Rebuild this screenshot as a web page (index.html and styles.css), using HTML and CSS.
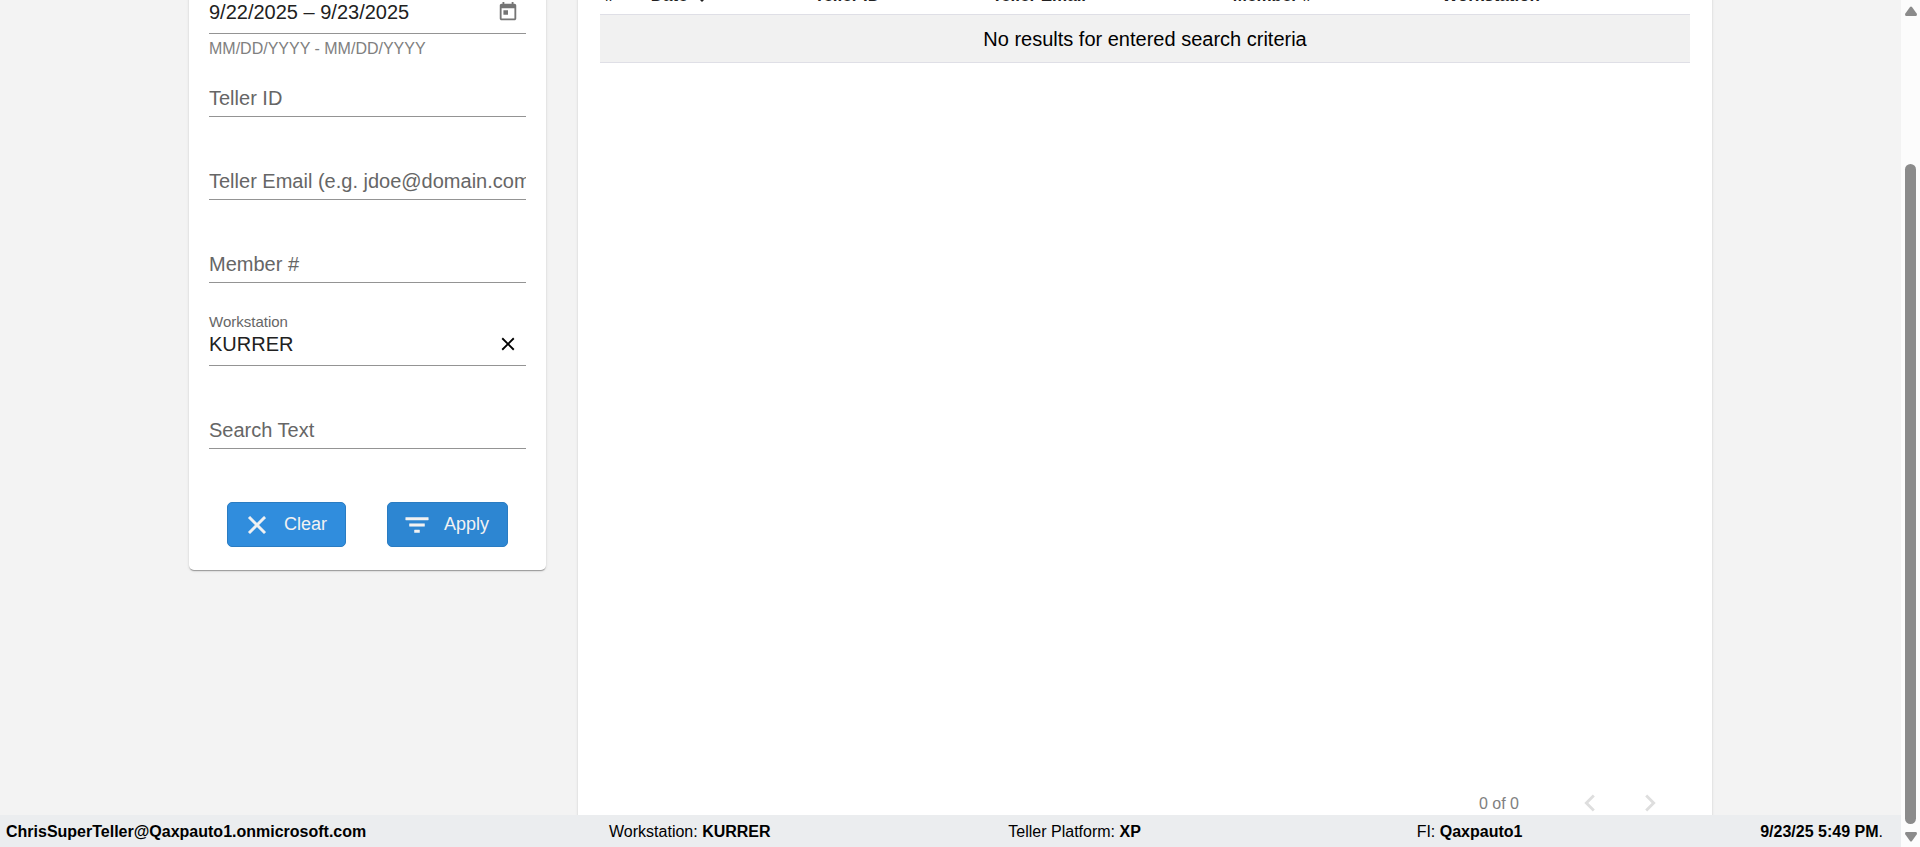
FILE: index.html
```html
<!DOCTYPE html>
<html lang="en">

<head>
    <meta charset="UTF-8">
    <meta name="viewport" content="width=device-width, initial-scale=1.0">
    <title>Teller Journal</title>
    <link rel="stylesheet" href="styles.css">
</head>

<body>
    <div class="page">
        <main class="main">
            <div class="content">
                <!-- Search filters -->
                <form class="card filters">
                    <div class="field">
                        <div class="field-label"></div>
                        <div class="field-row">
                            <input type="text" id="dateRange" aria-label="Date range" value="9/22/2025 – 9/23/2025">
                            <button type="button" class="icon-button calendar" aria-label="Open calendar">
                                <svg viewBox="0 0 24 24"><path d="M19 3h-1V1h-2v2H8V1H6v2H5c-1.11 0-1.99.9-1.99 2L3 19c0 1.1.89 2 2 2h14c1.1 0 2-.9 2-2V5c0-1.1-.9-2-2-2zm0 16H5V8h14v11zM7 10h5v5H7z"/></svg>
                            </button>
                        </div>
                        <div class="hint">MM/DD/YYYY - MM/DD/YYYY</div>
                    </div>
                    <div class="field empty">
                        <div class="field-row">
                            <input type="text" id="tellerId" aria-label="Teller ID" placeholder="Teller ID">
                        </div>
                    </div>
                    <div class="field empty">
                        <div class="field-row">
                            <input type="text" id="tellerEmail" aria-label="Teller Email" placeholder="Teller Email (e.g. jdoe@domain.com)">
                        </div>
                    </div>
                    <div class="field empty">
                        <div class="field-row">
                            <input type="text" id="member" aria-label="Member #" placeholder="Member #">
                        </div>
                    </div>
                    <div class="field">
                        <label class="field-label" for="workstation">Workstation</label>
                        <div class="field-row">
                            <input type="text" id="workstation" value="KURRER">
                            <button type="button" class="icon-button" aria-label="Clear workstation">
                                <svg viewBox="0 0 24 24"><path d="M19 6.41L17.59 5 12 10.59 6.41 5 5 6.41 10.59 12 5 17.59 6.41 19 12 13.41 17.59 19 19 17.59 13.41 12z"/></svg>
                            </button>
                        </div>
                    </div>
                    <div class="field empty">
                        <div class="field-row">
                            <input type="text" id="searchText" aria-label="Search Text" placeholder="Search Text">
                        </div>
                    </div>
                    <div class="actions">
                        <button type="reset" class="btn">
                            <svg viewBox="0 0 24 24"><path d="M19 6.41L17.59 5 12 10.59 6.41 5 5 6.41 10.59 12 5 17.59 6.41 19 12 13.41 17.59 19 19 17.59 13.41 12z"/></svg>
                            Clear
                        </button>
                        <button type="button" class="btn btn-apply">
                            <svg viewBox="0 0 24 24"><path d="M10 18h4v-2h-4v2zM3 6v2h18V6H3zm3 7h12v-2H6v2z"/></svg>
                            Apply
                        </button>
                    </div>
                </form>

                <!-- Results -->
                <section class="card results">
                    <table>
                        <thead>
                            <tr>
                                <th class="col-num">#</th>
                                <th class="col-date">Date
                                    <svg class="sort" viewBox="0 0 12 14"><path d="M5 0h2v9l3-3 1.5 1.5L6 13 .5 7.5 2 6l3 3z"/></svg>
                                </th>
                                <th class="col-teller">Teller ID</th>
                                <th class="col-email">Teller Email</th>
                                <th class="col-member">Member #</th>
                                <th>Workstation</th>
                            </tr>
                        </thead>
                        <tbody>
                            <tr>
                                <td colspan="6">No results for entered search criteria</td>
                            </tr>
                        </tbody>
                    </table>
                    <div class="paginator">
                        <span class="range">0 of 0</span>
                        <button type="button" aria-label="Previous page" disabled>
                            <svg viewBox="0 0 24 24"><path d="M15.41 7.41L14 6l-6 6 6 6 1.41-1.41L10.83 12z"/></svg>
                        </button>
                        <button type="button" aria-label="Next page" disabled>
                            <svg viewBox="0 0 24 24"><path d="M10 6L8.59 7.41 13.17 12l-4.58 4.59L10 18l6-6z"/></svg>
                        </button>
                    </div>
                </section>
            </div>
        </main>

        <footer class="status-bar">
            <strong class="user">ChrisSuperTeller@Qaxpauto1.onmicrosoft.com</strong>
            <span>Workstation: <strong>KURRER</strong></span>
            <span>Teller Platform: <strong>XP</strong></span>
            <span class="fi">FI: <strong>Qaxpauto1</strong></span>
            <span><strong>9/23/25 5:49 PM</strong>.</span>
        </footer>
    </div>

    <div class="scrollbar" aria-hidden="true">
        <svg viewBox="0 0 12 10"><path d="M5 1q1-1 2 0l5 7q0 2-1 2H1q-1 0-1-2z"/></svg>
        <div class="thumb"></div>
        <svg viewBox="0 0 12 10"><path d="M5 9q1 1 2 0l5-7q0-2-1-2H1Q0 0 0 2z"/></svg>
    </div>
</body>

</html>
```

FILE: styles.css
```css
* {
    box-sizing: border-box;
}

body {
    font-family: "Liberation Sans", Arial, sans-serif;
    margin: 0;
    height: 100vh;
    display: flex;
    background-color: #f3f3f3;
    color: #000;
    overflow: hidden;
}

button,
input {
    font-family: inherit;
}

svg {
    display: block;
    fill: currentColor;
}

.page {
    flex: 1;
    min-width: 0;
    display: flex;
    flex-direction: column;
}

.main {
    flex: 1;
    min-height: 0;
    display: flex;
    overflow: hidden;
}

/* scrolled down, so both cards run past the top edge */
.content {
    flex: 1;
    display: grid;
    grid-template-columns: 357px 1fr;
    gap: 32px;
    margin: -40px 189px -20px;
}

.card {
    background-color: #fff;
    border-radius: 5px;
    box-shadow: 0 2px 1px -1px rgba(0, 0, 0, 0.2), 0 1px 1px rgba(0, 0, 0, 0.14), 0 1px 3px rgba(0, 0, 0, 0.12);
}

/* Filters */
.filters {
    align-self: start;
    padding: 20px 20px 23px;
}

.field {
    height: 83px;
}

.field-label {
    display: block;
    height: 20px;
    font-size: 15px;
    line-height: 20px;
    color: #666;
}

.field-row {
    display: flex;
    align-items: center;
    padding-bottom: 9px;
    border-bottom: 1px solid #949494;
}

.field-row input {
    flex: 1;
    min-width: 0;
    height: 24px;
    padding: 0;
    border: none;
    outline: none;
    background: none;
    font-size: 20px;
    color: #212121;
}

.field-row input::placeholder {
    color: #666;
    opacity: 1;
}

.empty {
    padding-top: 23px;
}

.empty .field-row {
    padding-bottom: 6px;
}

.hint {
    margin-top: 5px;
    font-size: 16px;
    line-height: 20px;
    color: #808080;
}

.icon-button {
    width: 36px;
    height: 24px;
    padding: 0;
    border: none;
    background: none;
    display: flex;
    align-items: center;
    justify-content: center;
    color: #000;
}

.icon-button svg {
    width: 22px;
    height: 22px;
}

.calendar {
    color: #757575;
}

.actions {
    display: flex;
    justify-content: center;
    gap: 41px;
    margin-top: 24px;
}

.btn {
    display: flex;
    align-items: center;
    gap: 12px;
    height: 45px;
    padding: 0 18px 0 14px;
    border: 1px solid #2a7cc2;
    border-radius: 5px;
    background-color: #308ddd;
    color: #f2f2f2;
    font-size: 18px;
    cursor: pointer;
}

.btn-apply {
    background-color: #2d86d2;
}

.btn svg {
    width: 30px;
    height: 30px;
    stroke: currentColor;
    stroke-width: 0.4;
}

/* Results */
.results {
    display: flex;
    flex-direction: column;
    padding: 18px 22px 0;
}

table {
    width: 100%;
    table-layout: fixed;
    border-spacing: 0;
}

th {
    padding: 6px 5px;
    border-bottom: 1px solid #dfdfe6;
    font-size: 17px;
    line-height: 24px;
    text-align: left;
    color: #212121;
}

td {
    padding: 12px 5px 11px;
    border-bottom: 1px solid #dfdfe6;
    background-color: #f1f1f1;
    font-size: 20px;
    line-height: 24px;
    text-align: center;
}

.col-num {
    width: 4.2%;
}

.col-date {
    width: 15%;
}

.col-teller {
    width: 16.3%;
}

.col-email {
    width: 22.1%;
}

.col-member {
    width: 19.2%;
}

.sort {
    display: inline-block;
    width: 12px;
    height: 14px;
    margin-left: 4px;
    vertical-align: -2px;
}

.paginator {
    display: flex;
    align-items: center;
    justify-content: flex-end;
    height: 64px;
    margin-top: auto;
    padding-right: 10px;
    font-size: 16px;
    color: #808080;
}

.range {
    margin-right: 41px;
    padding-top: 2px;
}

.paginator button {
    display: flex;
    justify-content: center;
    width: 60px;
    padding: 0;
    border: none;
    background: none;
    color: #dedede;
}

.paginator svg {
    width: 34px;
    height: 34px;
}

/* Status bar */
.status-bar {
    display: flex;
    align-items: center;
    justify-content: space-between;
    height: 32px;
    padding: 2px 18px 0 6px;
    background-color: #ebedef;
    font-size: 16px;
    white-space: nowrap;
}

.user {
    margin-right: 5px;
}

.fi {
    margin-left: 38px;
}

/* Scrollbar */
.scrollbar {
    display: flex;
    flex-direction: column;
    align-items: center;
    width: 19px;
    padding: 6px 0 5px;
    background-color: #fcfcfc;
    color: #8b8b8b;
}

.scrollbar svg {
    width: 12px;
    height: 10px;
}

.thumb {
    flex: 1;
    width: 11px;
    margin: 148px 0 8px;
    border-radius: 6px;
    background-color: #8b8b8b;
}
```
